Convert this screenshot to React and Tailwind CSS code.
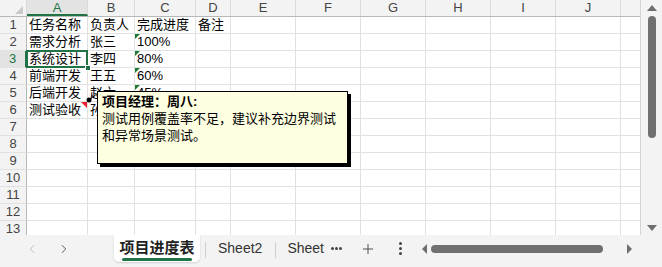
import { ChevronLeft, ChevronRight, Plus } from "lucide-react";

const cols = [
  { name: "A", w: "w-[61px]" },
  { name: "B", w: "w-[47px]" },
  { name: "C", w: "w-[61px]" },
  { name: "D", w: "w-[35px]" },
  { name: "E", w: "w-[65px]" },
  { name: "F", w: "w-[65px]" },
  { name: "G", w: "w-[65px]" },
  { name: "H", w: "w-[65px]" },
  { name: "I", w: "w-[65px]" },
  { name: "J", w: "w-[65px]" },
  { name: "", w: "w-[20px]" },
];

const data = [
  ["任务名称", "负责人", "完成进度", "备注"],
  ["需求分析", "张三", "100%"],
  ["系统设计", "李四", "80%"],
  ["前端开发", "王五", "60%"],
  ["后端开发", "赵六", "45%"],
  ["测试验收", "孙七", ""],
];

function Cell({ col, row, text }) {
  const selected = row === 3 && col === 0;
  const greenFlag = col === 2 && row >= 2 && row <= 5;
  const redFlag = col === 0 && row === 6;
  return (
    <div
      className={`relative ${cols[col].w} h-[17px] shrink-0 border-r border-b border-[#e1e1e1] pl-[2px] text-[13px] leading-[16px] text-black whitespace-nowrap overflow-visible`}
    >
      {greenFlag && (
        <div className="absolute left-0 top-0 w-0 h-0 border-t-[5px] border-r-[5px] border-t-[#1e7a34] border-r-transparent" />
      )}
      {redFlag && (
        <div className="absolute right-0 top-0 w-0 h-0 border-t-[6px] border-l-[6px] border-t-[#e8202a] border-l-transparent" />
      )}
      {text}
      {selected && (
        <>
          <div className="absolute -left-[1px] -top-[1px] w-[62px] h-[18px] border-2 border-[#217346] pointer-events-none" />
          <div className="absolute -right-[4px] -bottom-[4px] w-[6px] h-[6px] bg-[#217346] border border-white z-10" />
        </>
      )}
    </div>
  );
}

export default function App() {
  const rows = Array.from({ length: 13 }, (_, i) => i + 1);
  return (
    <div className="w-[662px] h-[267px] bg-[#f3f3f3] overflow-hidden font-['Liberation_Sans','Noto_Sans_CJK_SC',sans-serif] flex flex-col">
      <div className="flex h-[235px] shrink-0">
        <div className="relative w-[641px] h-[235px] bg-white overflow-hidden border-r border-[#d4d4d4]">
          {/* column headers */}
          <div className="flex h-[17px] bg-[#f3f3f3] border-b border-[#b8b8b8]">
            <div className="relative w-[27px] shrink-0 border-r border-[#dadada]">
              <div className="absolute right-[3px] bottom-[2px] w-0 h-0 border-b-[8px] border-l-[8px] border-b-[#c9c9c9] border-l-transparent" />
            </div>
            {cols.map((c, i) => (
              <div
                key={i}
                className={`${c.w} shrink-0 border-r border-[#dadada] text-center text-[13px] leading-[16px] ${
                  i === 0 ? "bg-[#e3e3e3] text-[#217346] border-b-2 border-b-[#217346]" : "text-[#444]"
                }`}
              >
                {c.name}
              </div>
            ))}
          </div>
          {rows.map((r) => (
            <div key={r} className="flex">
              <div
                className={`w-[27px] h-[17px] shrink-0 text-center text-[13px] leading-[16px] border-b border-[#e1e1e1] ${
                  r === 3
                    ? "bg-[#e3e3e3] text-[#217346] border-r-2 border-r-[#217346]"
                    : "bg-[#f3f3f3] text-[#444] border-r border-r-[#b8b8b8]"
                }`}
              >
                {r}
              </div>
              {cols.map((c, i) => (
                <Cell key={i} col={i} row={r} text={(data[r - 1] || [])[i] || ""} />
              ))}
            </div>
          ))}

          {/* comment connector */}
          <svg className="absolute left-0 top-0 pointer-events-none" width="120" height="120">
            <line x1="89" y1="100" x2="98" y2="93" stroke="#000" strokeWidth="1" />
            <circle cx="89" cy="100" r="2.5" fill="#000" />
          </svg>

          {/* comment box */}
          <div className="absolute left-[97px] top-[91px] w-[251px] h-[73px] bg-[#ffffe1] border border-black shadow-[3px_3px_0_#000] px-[4px] pt-[1px] text-[13px] leading-[17px] text-black">
            <div className="font-bold">项目经理：周八:</div>
            <div>测试用例覆盖率不足，建议补充边界测试</div>
            <div>和异常场景测试。</div>
          </div>
        </div>

        {/* vertical scrollbar */}
        <div className="w-[21px] h-[235px] flex flex-col items-center">
          <div className="mt-[5px] w-0 h-0 border-l-[5px] border-r-[5px] border-b-[6px] border-l-transparent border-r-transparent border-b-[#6e6e6e]" />
          <div className="mt-[5px] w-[8px] h-[122px] rounded-full bg-[#707070]" />
          <div className="mt-auto mb-[4px] w-0 h-0 border-l-[5px] border-r-[5px] border-t-[6px] border-l-transparent border-r-transparent border-t-[#6e6e6e]" />
        </div>
      </div>

      {/* sheet tab bar */}
      <div className="flex items-start h-[32px] text-[#333]">
        <div className="flex items-center h-[27px] pl-[25px] gap-[14px]">
          <ChevronLeft size={14} strokeWidth={1.25} className="text-[#aaa]" />
          <ChevronRight size={14} strokeWidth={1.5} className="text-[#444] ml-[4px]" />
        </div>
        <div className="ml-[43px] w-[86px] h-[27px] bg-white rounded-b-[5px] shadow-[0_1px_2px_rgba(0,0,0,0.15)] flex flex-col items-center justify-center">
          <span className="text-[15px] leading-[18px] font-semibold text-[#222] mt-[2px]">项目进度表</span>
          <div className="w-[70px] h-[3px] bg-[#217346] rounded-full mt-[1px]" />
        </div>
        <div className="ml-[5px] mt-[7px] w-px h-[16px] bg-[#cfcfcf]" />
        <div className="ml-[12px] h-[27px] flex items-center text-[14px]">Sheet2</div>
        <div className="ml-[13px] mt-[7px] w-px h-[16px] bg-[#cfcfcf]" />
        <div className="ml-[11px] h-[27px] flex items-center text-[14px] whitespace-nowrap">Sheet</div>
        <div className="ml-[7px] h-[27px] flex items-center gap-[1px]">
          <div className="w-[3px] h-[3px] rounded-full bg-[#444]" />
          <div className="w-[3px] h-[3px] rounded-full bg-[#444]" />
          <div className="w-[3px] h-[3px] rounded-full bg-[#444]" />
        </div>
        <div className="ml-[18px] h-[27px] flex items-center">
          <Plus size={16} strokeWidth={1.25} className="text-[#333]" />
        </div>
        <div className="ml-[23px] h-[27px] flex flex-col items-center justify-center gap-[2px]">
          <div className="w-[3px] h-[3px] rounded-full bg-[#444]" />
          <div className="w-[3px] h-[3px] rounded-full bg-[#444]" />
          <div className="w-[3px] h-[3px] rounded-full bg-[#444]" />
        </div>
        <div className="ml-[20px] h-[27px] flex items-center">
          <div className="w-0 h-0 border-t-[5px] border-b-[5px] border-r-[5px] border-t-transparent border-b-transparent border-r-[#6e6e6e]" />
          <div className="ml-[4px] w-[172px] h-[8px] rounded-full bg-[#707070]" />
          <div className="ml-[24px] w-0 h-0 border-t-[5px] border-b-[5px] border-l-[5px] border-t-transparent border-b-transparent border-l-[#6e6e6e]" />
        </div>
      </div>
    </div>
  );
}
